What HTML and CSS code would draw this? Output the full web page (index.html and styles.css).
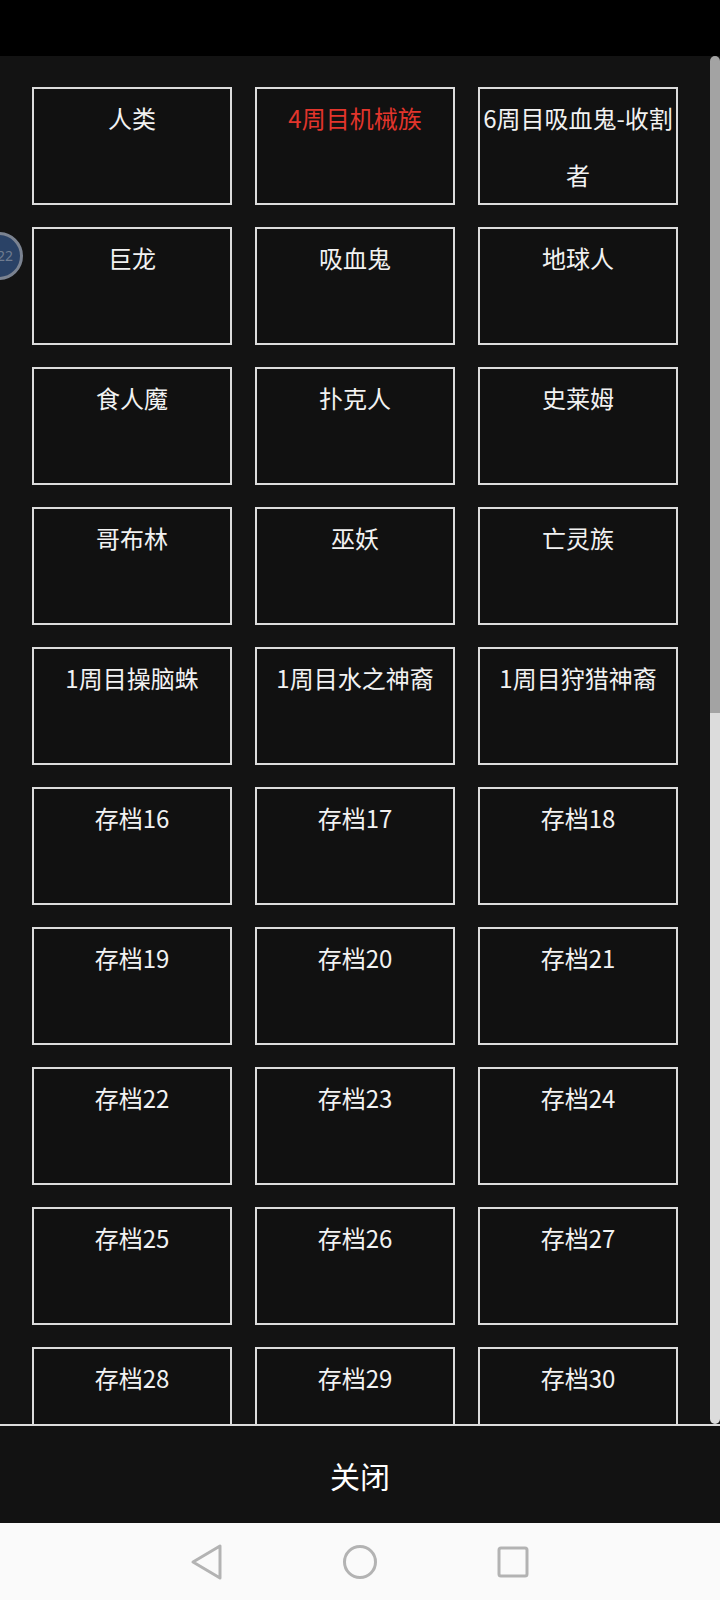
FILE: index.html
```html
<!DOCTYPE html>
<html lang="zh-CN">
<head>
<meta charset="utf-8">
<link rel="stylesheet" href="styles.css">
</head>
<body>
<div class="screen">
  <div class="topbar"></div>
  <div class="panel">
    <div class="scroll">
      <div class="grid">
        <div class="slot">人类</div>
        <div class="slot active">4周目机械族</div>
        <div class="slot">6周目吸血鬼-收割者</div>
        <div class="slot">巨龙</div>
        <div class="slot">吸血鬼</div>
        <div class="slot">地球人</div>
        <div class="slot">食人魔</div>
        <div class="slot">扑克人</div>
        <div class="slot">史莱姆</div>
        <div class="slot">哥布林</div>
        <div class="slot">巫妖</div>
        <div class="slot">亡灵族</div>
        <div class="slot">1周目操脑蛛</div>
        <div class="slot">1周目水之神裔</div>
        <div class="slot">1周目狩猎神裔</div>
        <div class="slot">存档16</div>
        <div class="slot">存档17</div>
        <div class="slot">存档18</div>
        <div class="slot">存档19</div>
        <div class="slot">存档20</div>
        <div class="slot">存档21</div>
        <div class="slot">存档22</div>
        <div class="slot">存档23</div>
        <div class="slot">存档24</div>
        <div class="slot">存档25</div>
        <div class="slot">存档26</div>
        <div class="slot">存档27</div>
        <div class="slot">存档28</div>
        <div class="slot">存档29</div>
        <div class="slot">存档30</div>
      </div>
    </div>
    <div class="scrollbar">
      <div class="thumb"></div>
      <div class="track"></div>
    </div>
    <div class="badge">22</div>
  </div>
  <div class="closebar">关闭</div>
  <div class="navbar">
    <svg class="navicon" viewBox="0 0 40 40" width="40" height="40">
      <path d="M33 4 L33 36 L6 20 Z" fill="none" stroke="#b3b3b3" stroke-width="3" stroke-linejoin="round"/>
    </svg>
    <svg class="navicon" viewBox="0 0 40 40" width="40" height="40">
      <circle cx="20" cy="20" r="15.5" fill="none" stroke="#b3b3b3" stroke-width="3"/>
    </svg>
    <svg class="navicon" viewBox="0 0 40 40" width="40" height="40">
      <rect x="6" y="6" width="28" height="28" rx="2" fill="none" stroke="#b3b3b3" stroke-width="3"/>
    </svg>
  </div>
</div>
</body>
</html>
```

FILE: styles.css
```css
html, body {
  margin: 0;
  padding: 0;
  background: #000;
}

.screen {
  width: 720px;
  height: 1600px;
  display: flex;
  flex-direction: column;
  font-family: "Noto Sans CJK SC", "Noto Sans", sans-serif;
  overflow: hidden;
}

.topbar {
  height: 56px;
  background: #000;
  flex: none;
}

.panel {
  position: relative;
  height: 1368px;
  flex: none;
  display: flex;
  background: #131313;
}

.scroll {
  flex: 1;
  overflow: hidden;
}

.grid {
  display: grid;
  grid-template-columns: repeat(3, 200px);
  column-gap: 23px;
  row-gap: 22px;
  padding: 31px 32px 0 32px;
}

.slot {
  box-sizing: border-box;
  height: 118px;
  border: 2px solid #dcdcdc;
  background: #111;
  color: #f2f2f2;
  font-size: 24px;
  line-height: 57px;
  text-align: center;
  overflow: hidden;
}

.slot.active {
  color: #e2352c;
}

.scrollbar {
  width: 10px;
  flex: none;
  display: flex;
  flex-direction: column;
}

.thumb {
  height: 657px;
  background: #a3a3a3;
  border-radius: 5px 5px 0 0;
}

.track {
  flex: 1;
  background: #dcdcdc;
  border-radius: 0 0 5px 5px;
}

.badge {
  position: absolute;
  left: -25px;
  top: 176px;
  width: 42px;
  height: 42px;
  border-radius: 50%;
  border: 3px solid #7b8391;
  background: #2a4266;
  color: #6f7c90;
  font-family: "Noto Sans", sans-serif;
  font-size: 14px;
  line-height: 42px;
  text-align: right;
  box-sizing: border-box;
  width: 48px;
  height: 48px;
  padding-right: 7px;
}

.closebar {
  height: 97px;
  flex: none;
  border-top: 2px solid #dcdcdc;
  background: #121212;
  color: #fff;
  font-size: 30px;
  display: flex;
  align-items: center;
  justify-content: center;
}

.navbar {
  flex: 1;
  background: #fafafa;
  display: flex;
  align-items: center;
  justify-content: center;
  gap: 113px;
}

.navicon {
  display: block;
}
```
